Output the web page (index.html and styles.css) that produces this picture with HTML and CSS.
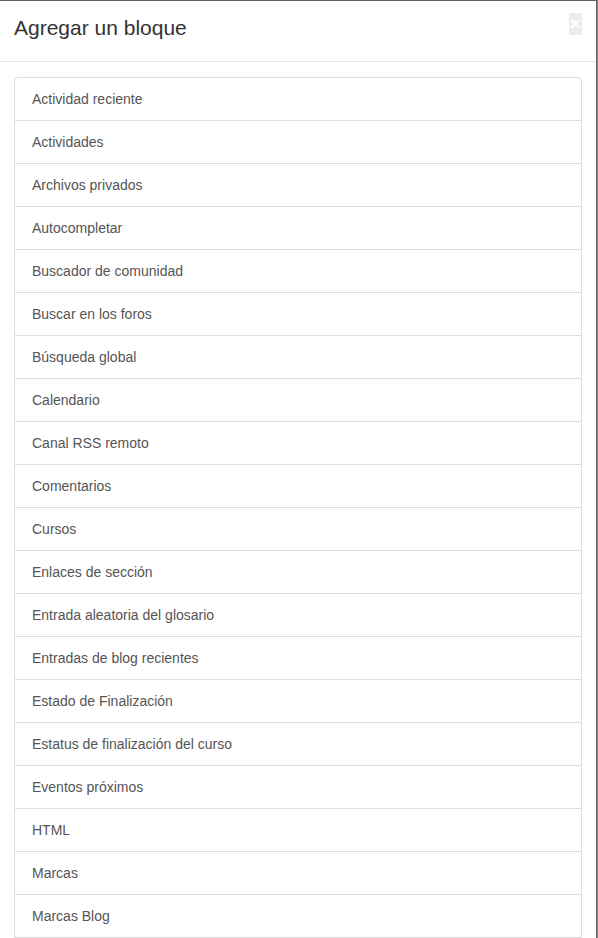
FILE: index.html
```html
<!DOCTYPE html>
<html lang="es">
<head>
<meta charset="utf-8">
<title>Agregar un bloque</title>
<link rel="stylesheet" href="styles.css">
</head>
<body>
<div class="modal">
  <div class="modal-header">
    <h4 class="modal-title">Agregar un bloque</h4>
    <button class="close" type="button" aria-label="Cerrar">×</button>
  </div>
  <div class="modal-body">
    <div class="list-group">
      <a class="list-group-item">Actividad reciente</a>
      <a class="list-group-item">Actividades</a>
      <a class="list-group-item">Archivos privados</a>
      <a class="list-group-item">Autocompletar</a>
      <a class="list-group-item">Buscador de comunidad</a>
      <a class="list-group-item">Buscar en los foros</a>
      <a class="list-group-item">Búsqueda global</a>
      <a class="list-group-item">Calendario</a>
      <a class="list-group-item">Canal RSS remoto</a>
      <a class="list-group-item">Comentarios</a>
      <a class="list-group-item">Cursos</a>
      <a class="list-group-item">Enlaces de sección</a>
      <a class="list-group-item">Entrada aleatoria del glosario</a>
      <a class="list-group-item">Entradas de blog recientes</a>
      <a class="list-group-item">Estado de Finalización</a>
      <a class="list-group-item">Estatus de finalización del curso</a>
      <a class="list-group-item">Eventos próximos</a>
      <a class="list-group-item">HTML</a>
      <a class="list-group-item">Marcas</a>
      <a class="list-group-item">Marcas Blog</a>
    </div>
  </div>
</div>
</body>
</html>
```
FILE: styles.css
```css
html, body {
  margin: 0;
  padding: 0;
  background: #fff;
  font-family: "Liberation Sans", Arial, sans-serif;
}

.modal {
  width: 596px;
  background: #fff;
  border-top: 1px solid #5f5f5f;
  border-right: 1px solid #5f5f5f;
  box-shadow: 1px 0 0 #8a8a8a;
  height: 937px;
  overflow: hidden;
}

.modal-header {
  display: flex;
  align-items: flex-start;
  justify-content: space-between;
  height: 60px;
  border-bottom: 1px solid #e5e5e5;
  padding: 0 14px 0 14px;
}

.modal-title {
  margin: 0;
  padding-top: 14px;
  font-size: 21px;
  line-height: 25px;
  font-weight: normal;
  color: #333;
}

.close {
  margin-top: 12px;
  margin-right: 0;
  width: 13px;
  height: 22px;
  padding: 0;
  border: none;
  background: #e9efe5;
  color: #fff;
  font-family: "Liberation Sans", Arial, sans-serif;
  font-size: 19px;
  font-weight: bold;
  line-height: 22px;
  text-align: center;
}

.modal-body {
  padding: 15px 14px 0 14px;
}

.list-group {
  display: flex;
  flex-direction: column;
  border: 1px solid #ddd;
  border-radius: 4px 4px 0 0;
}

.list-group-item {
  display: block;
  padding: 11px 17px 11px 17px;
  font-size: 14px;
  line-height: 20px;
  color: #555;
  border-top: 1px solid #ddd;
}

.list-group-item:first-child {
  border-top: none;
}
```
